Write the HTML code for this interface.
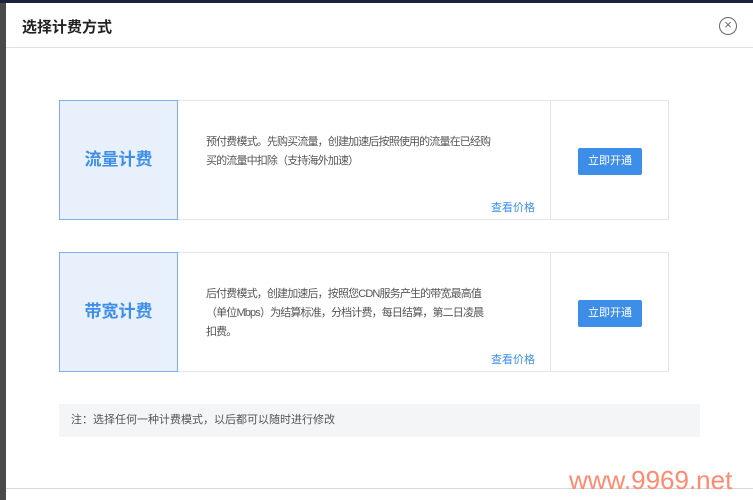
<!DOCTYPE html><html><head><meta charset="utf-8"><style>
*{margin:0;padding:0;box-sizing:border-box}
body{width:753px;height:500px;overflow:hidden;background:#fff;font-family:"Liberation Sans","Noto Sans CJK SC",sans-serif;position:relative}
.ls{position:absolute;left:0;top:0;width:6px;height:500px;background:#4a4a4a}
.tp{position:absolute;left:0;top:0;width:753px;height:3px;background:#1c2340}
.modal{position:absolute;left:6px;top:3px;width:747px;height:497px;background:#fff}
.hd{position:absolute;left:0;top:0;width:747px;height:45px;border-bottom:1px solid #dde1ea}
.hd h1{position:absolute;left:16px;top:13px;font-size:15px;font-weight:bold;color:#222}
.x{position:absolute;left:713px;top:14px;width:18px;height:18px;border:1.5px solid #666;border-radius:50%;color:#666;font-size:13px;line-height:14px;text-align:center}
.card{position:absolute;left:53px;width:610px;height:120px;border:1px solid #e3e5e8}
.lb{position:absolute;left:-1px;top:-1px;width:119px;height:120px;background:#e8f0fb;border:1px solid #7aaef0;color:#3d8ee8;font-size:17px;font-weight:bold;text-align:center;line-height:118px}
.desc{position:absolute;left:146px;top:32px;white-space:nowrap;font-size:11px;letter-spacing:-0.85px;line-height:19px;color:#555}
.lk{position:absolute;left:431px;top:98px;font-size:11px;color:#3d8ee8}
.dv{position:absolute;left:490px;top:0;width:1px;height:118px;background:#e3e5e8}
.bt{position:absolute;left:518px;top:47px;width:64px;height:27px;background:#3d8ee8;border-radius:2px;color:#fff;font-size:11px;text-align:center;line-height:27px}
.note{position:absolute;left:53px;top:401px;width:641px;height:33px;background:#f4f5f7;font-size:11px;color:#555;line-height:33px;padding-left:12px}
.bl{position:absolute;left:0;top:485px;width:747px;height:1px;background:#d5d9e2}
.wm{position:absolute;left:569px;top:465px;font-size:26px;color:#ff8a70;font-family:"Liberation Sans",sans-serif}
</style></head><body>
<div class="ls"></div><div class="tp"></div>
<div class="modal">
<div class="hd"><h1>选择计费方式</h1><div class="x">×</div></div>
<div class="card" style="top:97px"><div class="lb">流量计费</div><div class="desc">预付费模式。先购买流量，创建加速后按照使用的流量在已经购<br>买的流量中扣除（支持海外加速）</div><div class="lk">查看价格</div><div class="dv"></div><div class="bt">立即开通</div></div>
<div class="card" style="top:249px"><div class="lb">带宽计费</div><div class="desc" style="top:32px">后付费模式，创建加速后，按照您CDN服务产生的带宽最高值<br>（单位Mbps）为结算标准，分档计费，每日结算，第二日凌晨<br>扣费。</div><div class="lk">查看价格</div><div class="dv"></div><div class="bt">立即开通</div></div>
<div class="note">注：选择任何一种计费模式，以后都可以随时进行修改</div>
<div class="bl"></div>
</div>
<div class="wm">www.9969.net</div>
</body></html>
